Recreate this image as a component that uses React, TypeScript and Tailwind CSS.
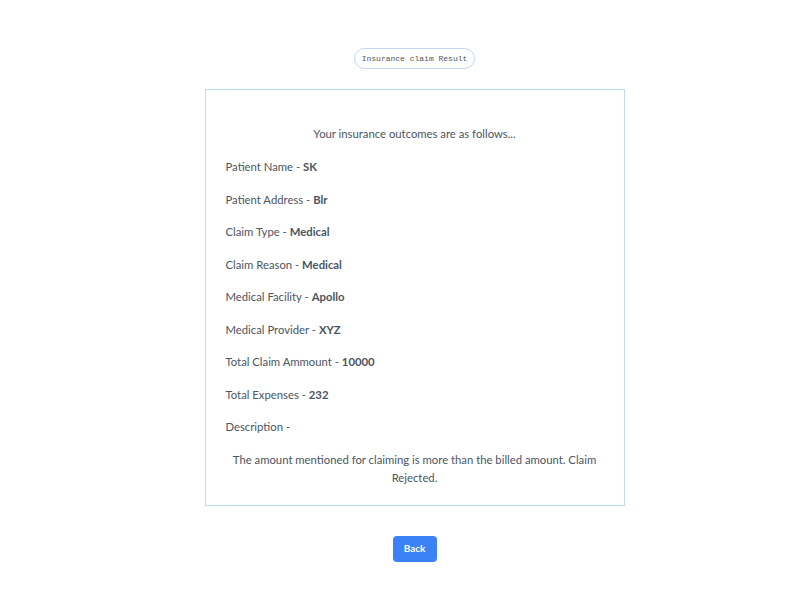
import React from 'react';

const rows: { label: string; value: string }[] = [
  { label: 'Patient Name', value: 'SK' },
  { label: 'Patient Address', value: 'Blr' },
  { label: 'Claim Type', value: 'Medical' },
  { label: 'Claim Reason', value: 'Medical' },
  { label: 'Medical Facility', value: 'Apollo' },
  { label: 'Medical Provider', value: 'XYZ' },
  { label: 'Total Claim Ammount', value: '10000' },
  { label: 'Total Expenses', value: '232' },
  { label: 'Description', value: '' },
];

export default function App() {
  return (
    <div className="min-h-screen bg-white flex flex-col items-center pt-[48px] pl-[33px] text-[#4b5563] font-['Lato',sans-serif]">
      {/* Title pill */}
      <div className="h-[21px] px-[7px] flex items-center rounded-full border border-[#bfd6f6] text-[8px] text-[#555] font-['Liberation_Mono',monospace]">
        Insurance claim Result
      </div>

      {/* Result card */}
      <div className="mt-[20px] w-[420px] border border-[#bfdcf5] px-[20px] pt-[35px] pb-[18px] text-[11.3px] leading-[18px]">
        <p className="text-center">Your insurance outcomes are as follows...</p>
        <div className="mt-[15px] flex flex-col gap-[14.5px]">
          {rows.map((row) => (
            <p key={row.label}>
              {row.label} - {row.value && <span className="font-bold">{row.value}</span>}
            </p>
          ))}
          <p className="text-center">
            The amount mentioned for claiming is more than the billed amount. Claim Rejected.
          </p>
        </div>
      </div>

      <button className="mt-[30px] w-[44px] h-[26px] rounded-[4px] bg-[#3b82f6] text-white text-[10px] font-bold">
        Back
      </button>
    </div>
  );
}
